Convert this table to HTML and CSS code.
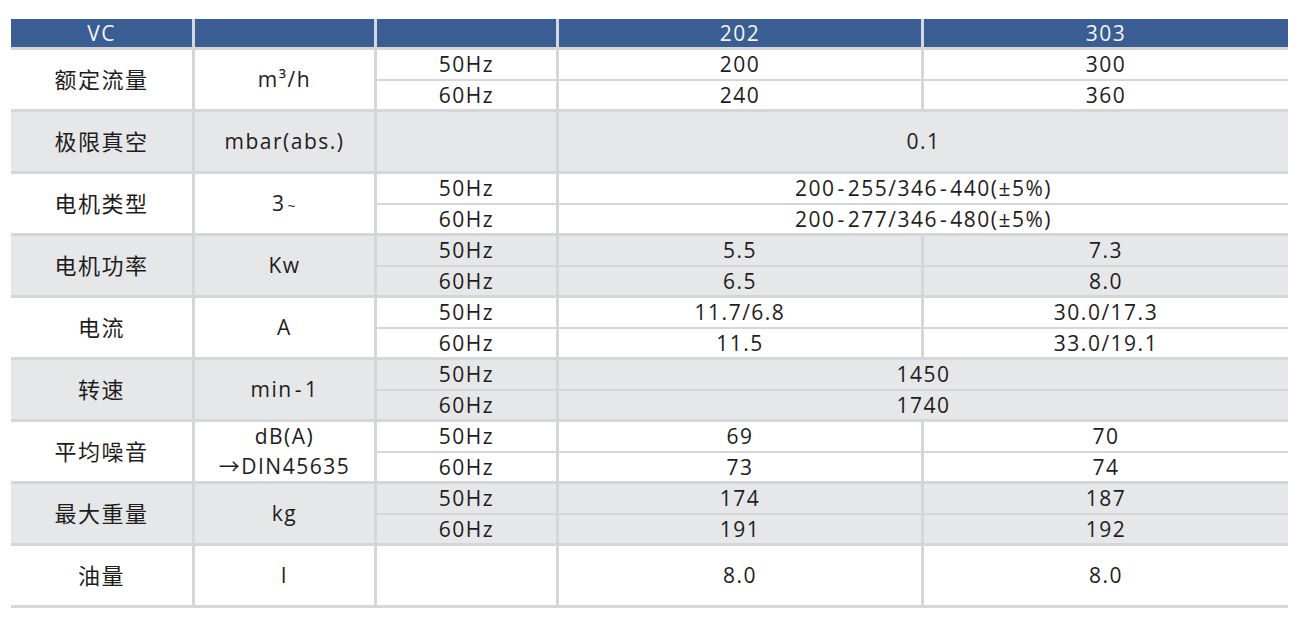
FILE: index.html
```html
<!DOCTYPE html>
<html lang="zh">
<head>
<meta charset="utf-8">
<title>VC 202 / 303</title>
<link rel="stylesheet" href="styles.css">
</head>
<body>
<div class="spec">
  <div class="head">
    <div class="h">VC</div>
    <div class="h"></div>
    <div class="h"></div>
    <div class="h">202</div>
    <div class="h">303</div>
  </div>

  <div class="row">
    <div class="c lab tall">额定流量</div>
    <div class="c tall">m³/h</div>
    <div class="c">50Hz</div>
    <div class="c">200</div>
    <div class="c">300</div>
    <div class="c">60Hz</div>
    <div class="c">240</div>
    <div class="c">360</div>
  </div>

  <div class="row alt">
    <div class="c lab tall">极限真空</div>
    <div class="c tall">mbar(abs.)</div>
    <div class="c tall"></div>
    <div class="c tall wide">0.1</div>
  </div>

  <div class="row">
    <div class="c lab tall">电机类型</div>
    <div class="c tall">3<span class="tilde">~</span></div>
    <div class="c">50Hz</div>
    <div class="c wide">200<span class="dash">-</span>255/346<span class="dash">-</span>440(±5%)</div>
    <div class="c">60Hz</div>
    <div class="c wide">200<span class="dash">-</span>277/346<span class="dash">-</span>480(±5%)</div>
  </div>

  <div class="row alt">
    <div class="c lab tall">电机功率</div>
    <div class="c tall">Kw</div>
    <div class="c">50Hz</div>
    <div class="c">5.5</div>
    <div class="c">7.3</div>
    <div class="c">60Hz</div>
    <div class="c">6.5</div>
    <div class="c">8.0</div>
  </div>

  <div class="row">
    <div class="c lab tall">电流</div>
    <div class="c tall">A</div>
    <div class="c">50Hz</div>
    <div class="c">11.7/6.8</div>
    <div class="c">30.0/17.3</div>
    <div class="c">60Hz</div>
    <div class="c">11.5</div>
    <div class="c">33.0/19.1</div>
  </div>

  <div class="row alt">
    <div class="c lab tall">转速</div>
    <div class="c tall">min<span class="dash">-</span>1</div>
    <div class="c">50Hz</div>
    <div class="c wide">1450</div>
    <div class="c">60Hz</div>
    <div class="c wide">1740</div>
  </div>

  <div class="row">
    <div class="c lab tall">平均噪音</div>
    <div class="c tall split"><span>dB(A)</span><span>→DIN45635</span></div>
    <div class="c">50Hz</div>
    <div class="c">69</div>
    <div class="c">70</div>
    <div class="c">60Hz</div>
    <div class="c">73</div>
    <div class="c">74</div>
  </div>

  <div class="row alt">
    <div class="c lab tall">最大重量</div>
    <div class="c tall">kg</div>
    <div class="c">50Hz</div>
    <div class="c">174</div>
    <div class="c">187</div>
    <div class="c">60Hz</div>
    <div class="c">191</div>
    <div class="c">192</div>
  </div>

  <div class="row">
    <div class="c lab tall">油量</div>
    <div class="c tall">l</div>
    <div class="c tall"></div>
    <div class="c tall">8.0</div>
    <div class="c tall">8.0</div>
  </div>
</div>
</body>
</html>
```

FILE: styles.css
```css
html, body {
  margin: 0;
  padding: 0;
  background: #ffffff;
}

body {
  font-family: "Open Sans", "Noto Sans CJK SC", sans-serif;
  color: #1f1c1d;
}

.spec {
  margin: 19px 0 0 11px;
  width: 1277px;
}

.head,
.row {
  display: grid;
  grid-template-columns: 181px 179px 179px 362px 364px;
  column-gap: 3px;
  border-bottom: 3px solid #d5d6d8;
}

.head {
  height: 28px;
  background: #d3d7de;
}

.h {
  background: #3a5d94;
  color: #f2f4f8;
  font-size: 21px;
  line-height: 28px;
  text-align: center;
  letter-spacing: 1.5px;
}

.row {
  grid-template-rows: 29px 28px;
  row-gap: 2px;
  background: #d5d6d8;
}

.c {
  background: #ffffff;
  display: flex;
  align-items: center;
  justify-content: center;
  font-size: 21px;
  letter-spacing: 1.5px;
  line-height: 1;
  white-space: nowrap;
}

.row.alt .c {
  background: #e6e7e9;
}

.tall {
  grid-row: span 2;
}

.wide {
  grid-column: span 2;
}

.lab {
  font-family: "Noto Sans CJK SC", sans-serif;
  font-size: 22px;
  letter-spacing: 1.5px;
  padding-bottom: 3px;
}

.dash {
  padding: 0 2px;
}

.tilde {
  font-size: 14px;
  margin-left: 2px;
  position: relative;
  top: 2px;
}

.split {
  flex-direction: column;
  justify-content: space-around;
}

.split span {
  display: block;
  line-height: 29px;
}
```
